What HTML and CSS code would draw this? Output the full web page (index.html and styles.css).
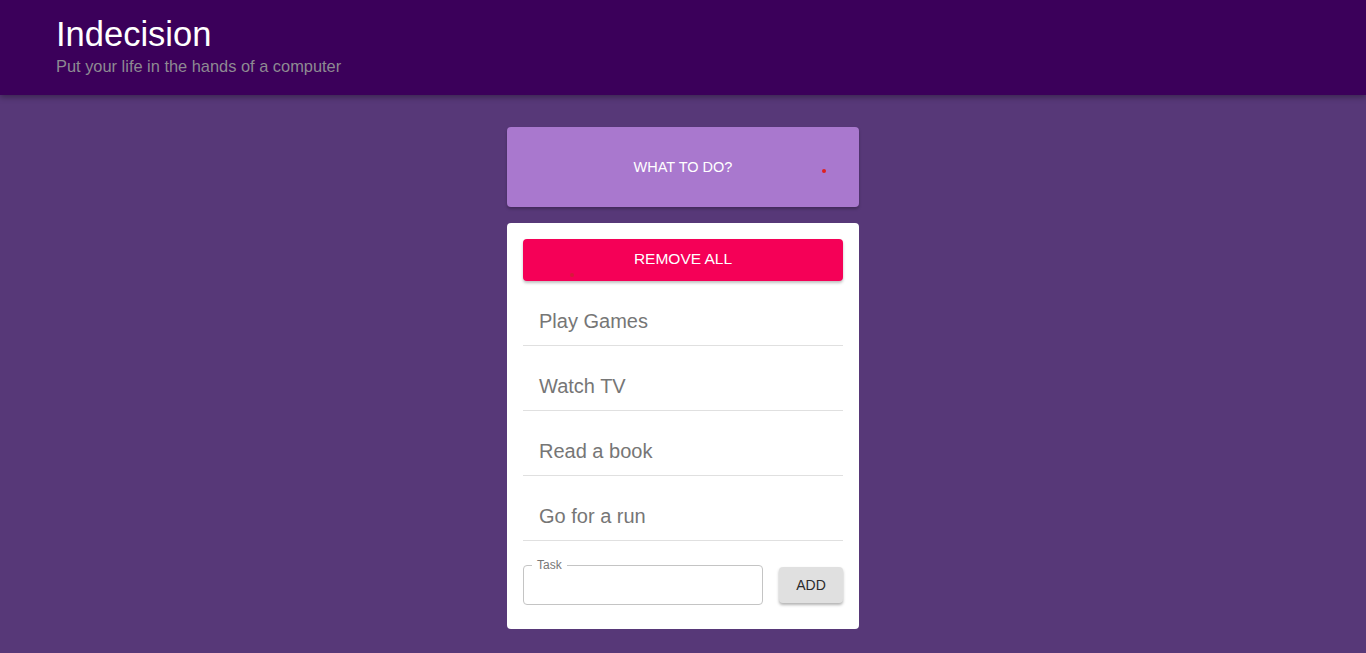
FILE: index.html
```html
<!DOCTYPE html>
<html>
<head>
<meta charset="utf-8">
<title>Indecision</title>
<link rel="stylesheet" href="styles.css">
</head>
<body>
<header class="header">
  <div class="header-inner">
    <h1 class="title">Indecision</h1>
    <h2 class="subtitle">Put your life in the hands of a computer</h2>
  </div>
</header>
<main class="main">
  <div class="container">
    <button class="big-button">WHAT TO DO?<span class="dot dot-a"></span></button>
    <section class="card">
      <button class="remove-button">REMOVE ALL<span class="dot dot-b"></span></button>
      <ul class="options">
        <li class="option">Play Games</li>
        <li class="option">Watch TV</li>
        <li class="option">Read a book</li>
        <li class="option">Go for a run</li>
      </ul>
      <form class="add-form">
        <fieldset class="field">
          <legend class="legend">Task</legend>
          <input class="input" type="text">
        </fieldset>
        <button class="add-button" type="button">ADD</button>
      </form>
    </section>
  </div>
</main>
</body>
</html>
```
FILE: styles.css
```css
* { box-sizing: border-box; }
html, body { margin: 0; padding: 0; }
body {
  background: #573878;
  font-family: "Liberation Sans", Arial, sans-serif;
  min-height: 653px;
}
.header {
  background: #3b005a;
  height: 95px;
  box-shadow: 0 2px 6px rgba(0,0,0,0.35);
  position: relative;
}
.header-inner {
  padding: 15px 56px 0;
}
.title {
  margin: 0;
  font-size: 34.5px;
  font-weight: normal;
  color: #ffffff;
  line-height: 38px;
}
.subtitle {
  margin: 4px 0 0;
  font-size: 16.4px;
  font-weight: normal;
  color: #8e8a92;
  line-height: 18px;
}
.main {
  display: flex;
  justify-content: center;
  padding-top: 32px;
}
.container {
  width: 352px;
  display: flex;
  flex-direction: column;
  gap: 16px;
}
.big-button {
  position: relative;
  height: 80px;
  border: none;
  border-radius: 4px;
  background: #a978ce;
  color: #ffffff;
  font-family: "Liberation Sans", Arial, sans-serif;
  font-size: 14.5px;
  box-shadow: 0 2px 3px rgba(0,0,0,0.25);
  padding: 0;
}
.dot {
  position: absolute;
  width: 4px;
  height: 4px;
  border-radius: 50%;
  background: #e0201e;
}
.dot-a { left: 315px; top: 42px; }
.dot-b { left: 47px; top: 34px; background: #d41a3a; }
.card {
  background: #ffffff;
  border-radius: 4px;
  padding: 16px 16px 21px;
}
.remove-button {
  position: relative;
  width: 100%;
  height: 42px;
  border: none;
  border-radius: 4px;
  background: #f50057;
  color: #ffffff;
  font-family: "Liberation Sans", Arial, sans-serif;
  font-size: 15.5px;
  box-shadow: 0 2px 3px rgba(0,0,0,0.25);
  padding: 0 0 2px;
}
.options {
  list-style: none;
  margin: 0;
  padding: 0;
}
.option {
  height: 65px;
  padding: 28px 16px 0;
  font-size: 20px;
  line-height: 24px;
  color: #767676;
  border-bottom: 1px solid #e0e0e0;
}
.add-form {
  display: flex;
  align-items: center;
  gap: 16px;
  margin-top: 20px;
}
.field {
  margin: 0;
  width: 240px;
  height: 47px;
  border: 1px solid #c4c4c4;
  border-radius: 4px;
  padding: 0 8px;
  position: relative;
  top: -3px;
}
.legend {
  font-size: 12px;
  color: #777777;
  padding: 0 5px;
  margin-left: 0;
  line-height: 14px;
}
.input {
  border: none;
  outline: none;
  width: 100%;
  height: 30px;
  font-size: 16px;
  font-family: "Liberation Sans", Arial, sans-serif;
}
.add-button {
  width: 64px;
  height: 36px;
  border: none;
  border-radius: 4px;
  background: #e0e0e0;
  color: #2b2b2b;
  font-family: "Liberation Sans", Arial, sans-serif;
  font-size: 14px;
  box-shadow: 0 2px 3px rgba(0,0,0,0.3);
  padding: 0;
}
```
